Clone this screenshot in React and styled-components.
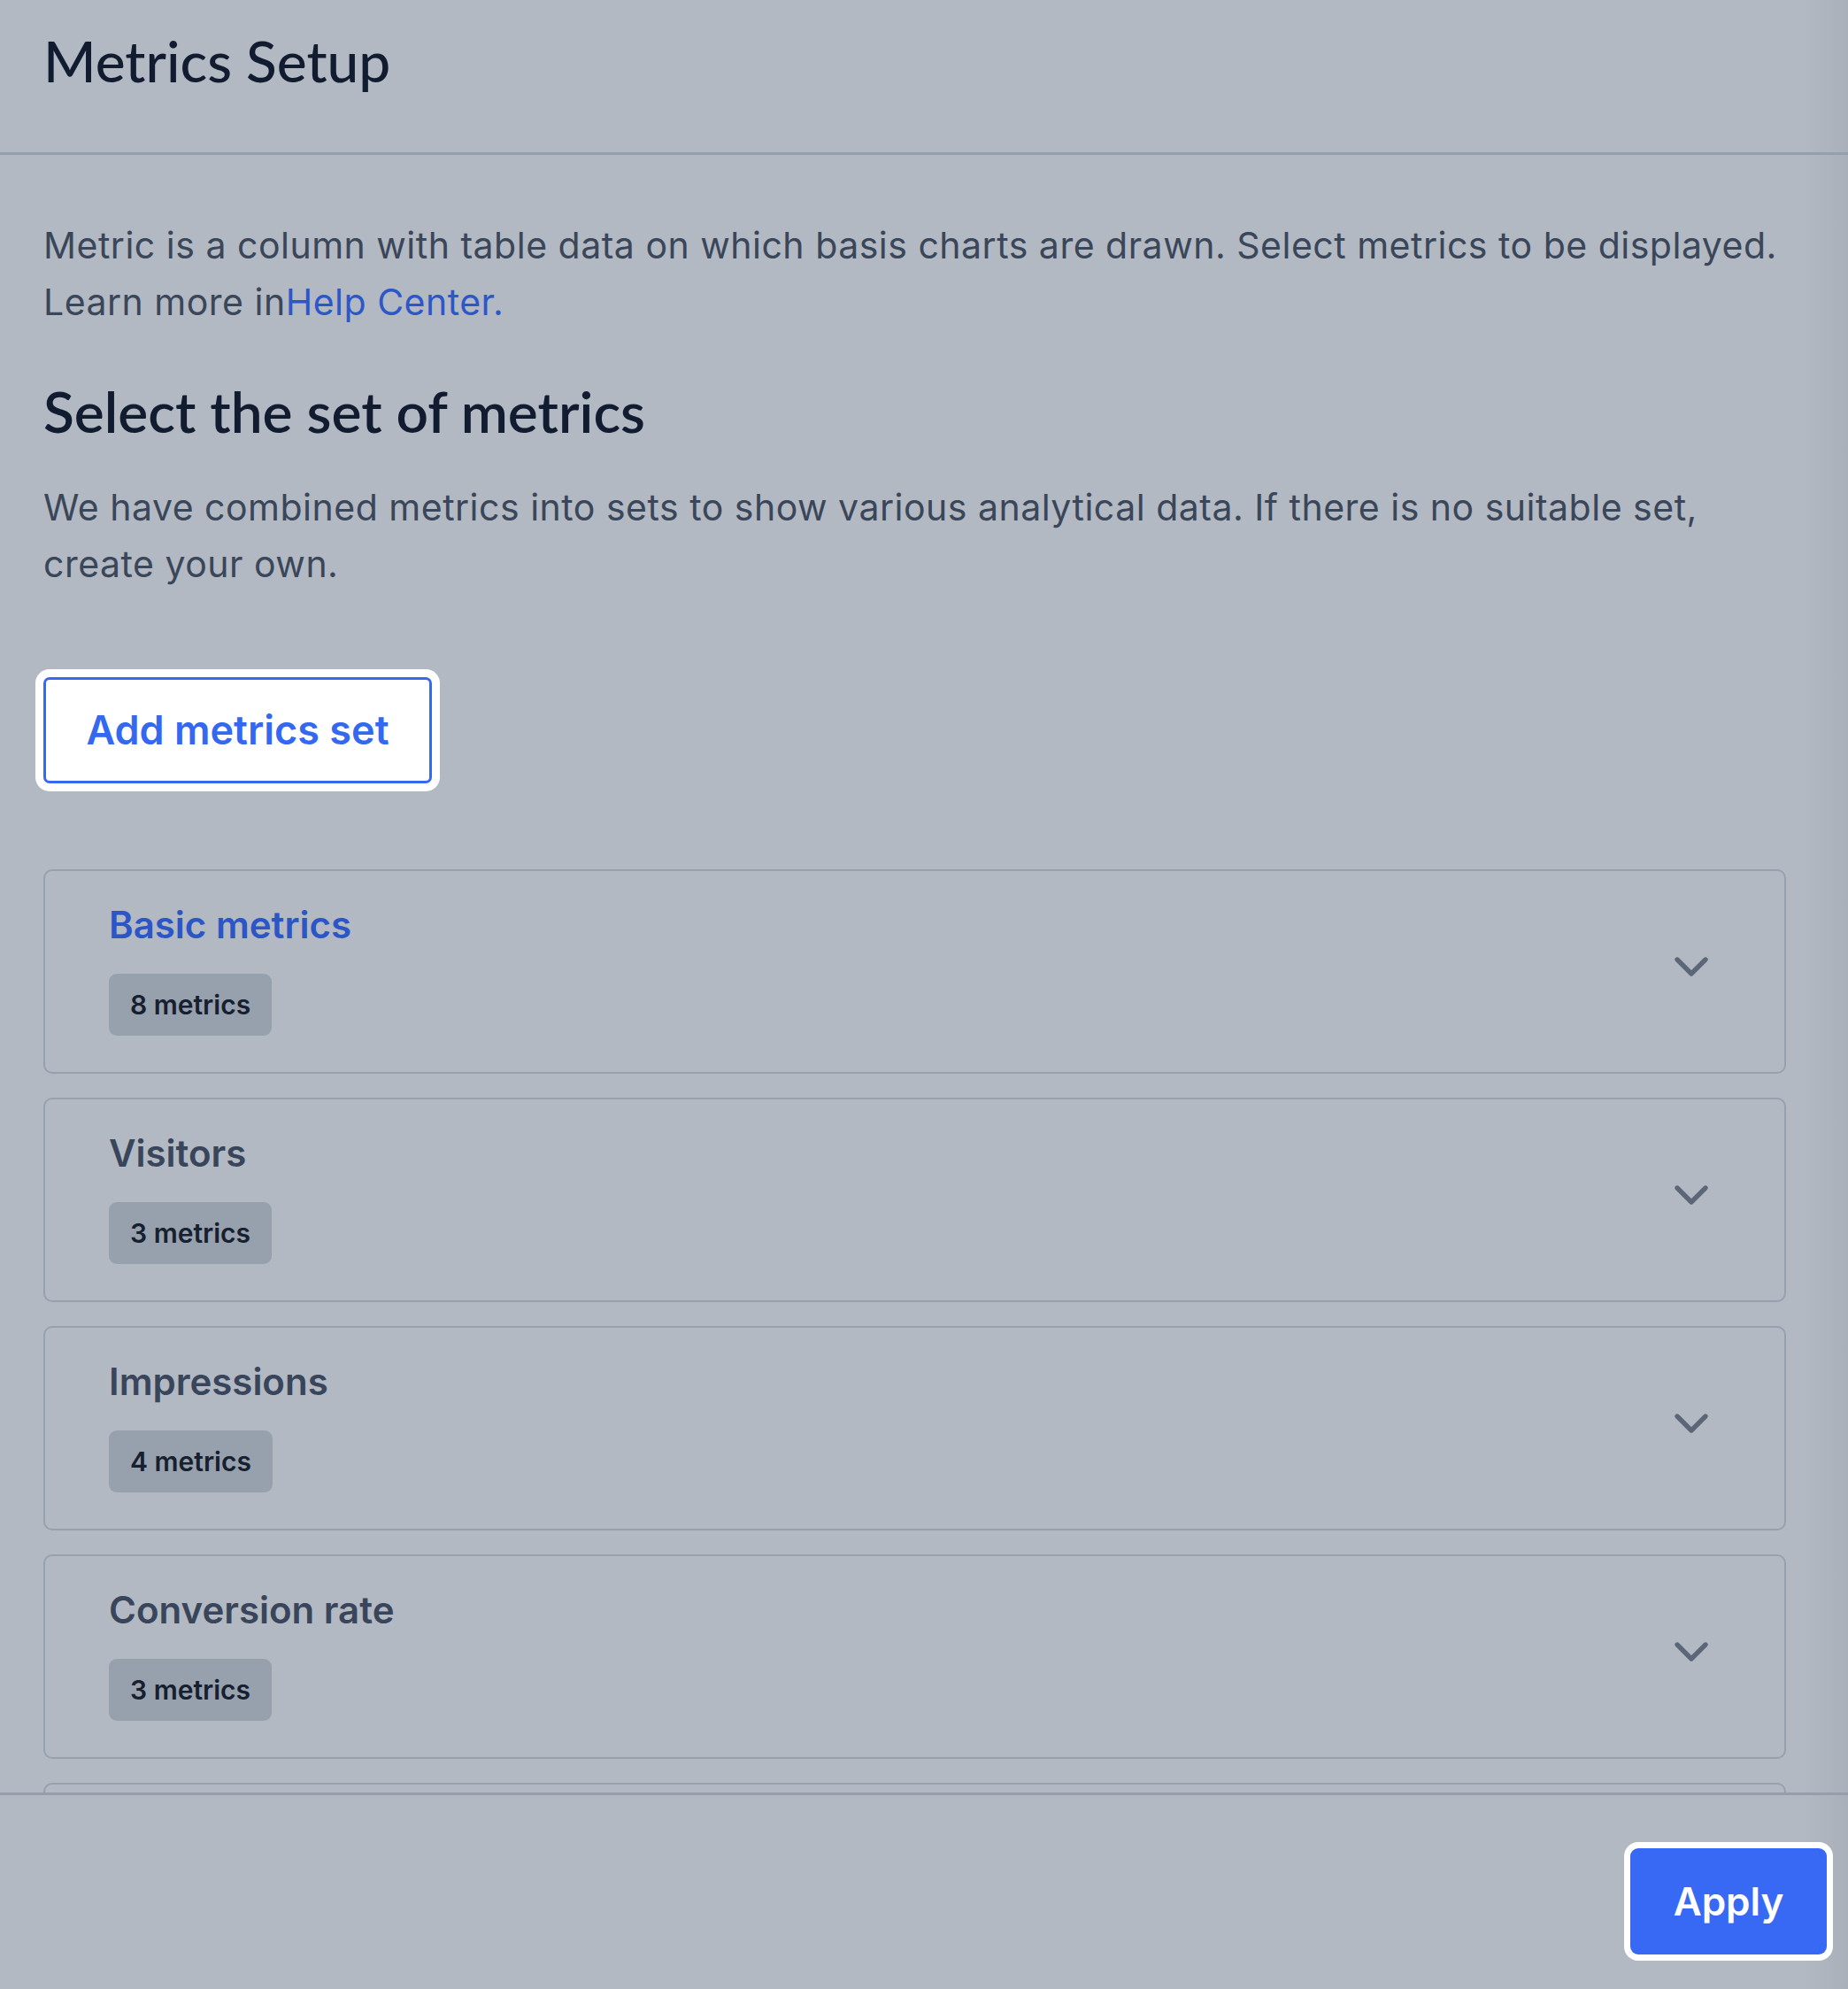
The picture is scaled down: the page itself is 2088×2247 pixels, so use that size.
import React from "react";
import styled, { createGlobalStyle } from "styled-components";
import { ChevronDown } from "lucide-react";

const GlobalStyle = createGlobalStyle`
  html, body {
    margin: 0;
    padding: 0;
    height: 100%;
  }
  body {
    background: linear-gradient(to right, #b3b9c2 calc(100% - 52px), #aab0b9 100%);
    font-family: Inter, "Liberation Sans", sans-serif;
    overflow: hidden;
  }
  #root {
    height: 100%;
  }
`;

const Page = styled.div`
  display: flex;
  flex-direction: column;
  height: 100vh;
`;

const Header = styled.header`
  box-sizing: border-box;
  height: 175px;
  padding: 31px 49px 0;
  border-bottom: 3px solid #959fab;
  flex-shrink: 0;
`;

const HeaderTitle = styled.h1`
  margin: 0;
  font-family: Lato, "Liberation Sans", sans-serif;
  font-size: 64px;
  line-height: 1.2;
  font-weight: 500;
  color: #111c30;
`;

const Content = styled.main`
  flex: 1;
  overflow: hidden;
  padding: 0 70px 0 49px;
`;

const Text = styled.p`
  margin: ${(p) => p.$top || 0}px 0 0;
  font-size: 41px;
  line-height: 64px;
  letter-spacing: 0.5px;
  color: #3a4659;
`;

const Link = styled.a`
  color: #2d57c8;
  text-decoration: none;
`;

const SectionTitle = styled.h2`
  margin: 54px 0 0;
  font-family: Lato, "Liberation Sans", sans-serif;
  font-size: 64px;
  line-height: 1.2;
  font-weight: 600;
  color: #111c30;
`;

const AddButton = styled.button`
  margin-top: 96px;
  box-sizing: border-box;
  height: 120px;
  width: 439px;
  background: #fff;
  border: 3px solid #3668f0;
  border-radius: 7px;
  box-shadow: 0 0 0 9px #fff;
  color: #3568f0;
  font-family: Inter, "Liberation Sans", sans-serif;
  font-size: 45px;
  font-weight: 600;
  cursor: pointer;
`;

const CardList = styled.div`
  margin-top: 97px;
  display: flex;
  flex-direction: column;
  gap: 27px;
`;

const Card = styled.div`
  box-sizing: border-box;
  height: 231px;
  flex-shrink: 0;
  border: 2px solid #97a1ae;
  border-radius: 10px;
  padding: 32px 73px 0 72px;
  display: flex;
  align-items: center;
  justify-content: space-between;
`;

const CardInfo = styled.div`
  display: flex;
  flex-direction: column;
  align-items: flex-start;
  align-self: flex-start;
  gap: 27px;
`;

const CardTitle = styled.div`
  font-size: 42px;
  line-height: 57px;
  font-weight: 600;
  color: ${(p) => (p.$active ? "#2c56c6" : "#38455a")};
`;

const Badge = styled.span`
  display: inline-flex;
  align-items: center;
  height: 70px;
  padding: 0 24px;
  border-radius: 9px;
  background: #97a1ad;
  color: #16202f;
  font-size: 30px;
  font-weight: 600;
`;

const Chevron = styled(ChevronDown)`
  margin-top: -42px;
  color: #5b6678;
`;

const Footer = styled.footer`
  flex-shrink: 0;
  box-sizing: border-box;
  height: 222px;
  border-top: 3px solid #959fab;
  padding: 60px 24px 0;
  display: flex;
  justify-content: flex-end;
  align-items: flex-start;
`;

const ApplyButton = styled.button`
  width: 222px;
  height: 120px;
  border: none;
  border-radius: 9px;
  background: #3869f5;
  box-shadow: 0 0 0 7px #fff;
  color: #fff;
  font-family: Inter, "Liberation Sans", sans-serif;
  font-size: 44px;
  font-weight: 600;
  cursor: pointer;
`;

const sets = [
  { name: "Basic metrics", count: 8, active: true },
  { name: "Visitors", count: 3 },
  { name: "Impressions", count: 4 },
  { name: "Conversion rate", count: 3 },
];

const App = () => {
  return (
    <Page>
      <GlobalStyle />
      <Header>
        <HeaderTitle>Metrics Setup</HeaderTitle>
      </Header>
      <Content>
        <Text $top={70}>
          Metric is a column with table data on which basis charts are drawn. Select metrics to be displayed.
          <br />
          Learn more in<Link href="#">Help Center.</Link>
        </Text>
        <SectionTitle>Select the set of metrics</SectionTitle>
        <Text $top={37}>
          We have combined metrics into sets to show various analytical data. If there is no suitable set,
          <br />
          create your own.
        </Text>
        <AddButton>Add metrics set</AddButton>
        <CardList>
          {sets.map((s) => (
            <Card key={s.name}>
              <CardInfo>
                <CardTitle $active={s.active}>{s.name}</CardTitle>
                <Badge>{s.count} metrics</Badge>
              </CardInfo>
              <Chevron size={64} strokeWidth={2} />
            </Card>
          ))}
          {/* next set, scrolled below the footer */}
          <Card />
        </CardList>
      </Content>
      <Footer>
        <ApplyButton>Apply</ApplyButton>
      </Footer>
    </Page>
  );
};

export default App;
